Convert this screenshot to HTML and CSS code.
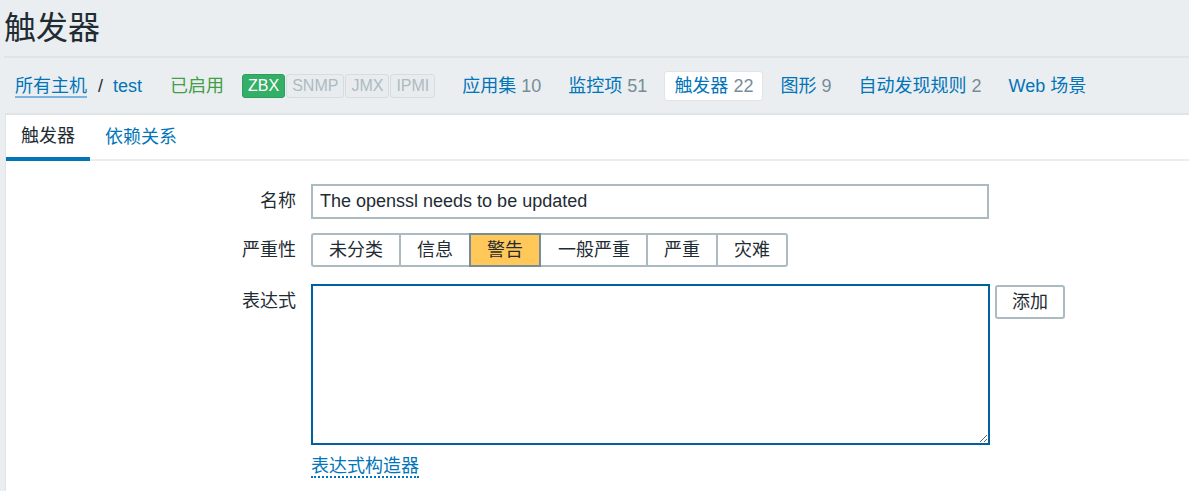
FILE: index.html
```html
<!DOCTYPE html>
<html lang="zh-CN">
<head>
<meta charset="utf-8">
<title>触发器</title>
<link rel="stylesheet" href="styles.css">
</head>
<body>
<header class="header">
  <h1 class="title">触发器</h1>
</header>
<nav class="nav">
  <a class="crumb-link" href="#">所有主机</a>
  <span class="sep">/</span>
  <a class="crumb" href="#">test</a>
  <span class="enabled">已启用</span>
  <span class="tags">
    <span class="tag tag-on">ZBX</span>
    <span class="tag tag-off">SNMP</span>
    <span class="tag tag-off">JMX</span>
    <span class="tag tag-off">IPMI</span>
  </span>
  <ul class="nav-items">
    <li class="nav-item"><a href="#">应用集</a> <span class="count">10</span></li>
    <li class="nav-item"><a href="#">监控项</a> <span class="count">51</span></li>
    <li class="nav-item nav-item-active"><a href="#">触发器</a> <span class="count">22</span></li>
    <li class="nav-item"><a href="#">图形</a> <span class="count">9</span></li>
    <li class="nav-item"><a href="#">自动发现规则</a> <span class="count">2</span></li>
    <li class="nav-item"><a href="#">Web 场景</a></li>
  </ul>
</nav>
<main class="panel">
  <div class="tabs">
    <a class="tab tab-active" href="#">触发器</a>
    <a class="tab" href="#">依赖关系</a>
  </div>
  <form class="form">
    <div class="row row-name">
      <label class="label">名称</label>
      <div class="field"><input class="input" type="text" value="The openssl needs to be updated"></div>
    </div>
    <div class="row row-severity">
      <label class="label label-sev">严重性</label>
      <div class="field">
        <div class="seg">
          <span class="seg-item">未分类</span>
          <span class="seg-item">信息</span>
          <span class="seg-item seg-active">警告</span>
          <span class="seg-item seg-after">一般严重</span>
          <span class="seg-item">严重</span>
          <span class="seg-item seg-last">灾难</span>
        </div>
      </div>
    </div>
    <div class="row row-expr">
      <label class="label">表达式</label>
      <div class="field field-expr">
        <textarea class="textarea"></textarea>
        <button class="btn" type="button">添加</button>
      </div>
    </div>
    <div class="row row-link">
      <span class="label"></span>
      <div class="field"><a class="dotted" href="#">表达式构造器</a></div>
    </div>
  </form>
</main>
</body>
</html>
```

FILE: styles.css
```css
html, body {
  margin: 0;
  padding: 0;
}
body {
  background: #ebeef0;
  color: #1f2c33;
  font-family: "Liberation Sans", "Noto Sans CJK SC", sans-serif;
  font-size: 18px;
  overflow: hidden;
}
a {
  color: #0275b8;
  text-decoration: none;
}
.header {
  margin-left: 4px;
  height: 56px;
  border-bottom: 2px solid #dfe4e7;
  display: flex;
  align-items: center;
}
.title {
  margin: 0;
  font-size: 32px;
  font-weight: normal;
  line-height: 40px;
  color: #1f2c33;
}
.nav {
  height: 55px;
  display: flex;
  align-items: center;
  padding-left: 15px;
  line-height: 22px;
}
.crumb-link {
  border-bottom: 2px solid #7db3dc;
  line-height: 20px;
  padding-top: 2px;
}
.sep {
  margin: 0 10px 0 11px;
  color: #1f2c33;
}
.enabled {
  color: #429e47;
  margin-left: 28px;
}
.tags {
  display: flex;
  gap: 1px;
  margin-left: 18px;
}
.tag {
  font-size: 16px;
  line-height: 22px;
  padding: 0 5px;
  border: 1px solid #d6dde1;
  border-radius: 3px;
}
.tag-on {
  background: #34af67;
  border-color: #2f9e5d;
  color: #ffffff;
}
.tag-off {
  background: #e9ecee;
  color: #acbbc2;
}
.nav-items {
  list-style: none;
  margin: 0 0 0 17px;
  padding: 0;
  display: flex;
  gap: 7px;
}
.nav-item {
  padding: 0 9px;
  height: 28px;
  line-height: 28px;
  border: 1px solid transparent;
  border-radius: 3px;
  white-space: nowrap;
}
.nav-item-active {
  background: #ffffff;
  border-color: #dfe4e7;
}
.count {
  color: #768d99;
}
.panel {
  margin-left: 5px;
  background: #ffffff;
  border-top: 2px solid #dfe4e7;
  border-left: 1px solid #dfe4e7;
  height: 400px;
}
.tabs {
  display: flex;
  height: 44px;
  border-bottom: 2px solid #ebeef0;
}
.tab {
  padding: 0 15px;
  line-height: 44px;
  height: 44px;
  box-sizing: border-box;
}
.tab-active {
  color: #1f2c33;
  border-bottom: 4px solid #0275b8;
  height: 46px;
  line-height: 42px;
}
.form {
  padding-top: 23px;
}
.row {
  display: flex;
  align-items: flex-start;
}
.row-severity {
  margin-top: 14px;
}
.row-expr {
  margin-top: 17px;
}
.row-link {
  margin-top: 11px;
}
.label {
  width: 305px;
  padding-right: 15px;
  box-sizing: border-box;
  flex: none;
  text-align: right;
  line-height: 35px;
  color: #1f2c33;
}
.label-sev {
  line-height: 34px;
}
.field {
  display: flex;
}
.input {
  width: 678px;
  height: 35px;
  box-sizing: border-box;
  border: 2px solid #acbbc2;
  padding: 0 7px;
  font: inherit;
  font-size: 18px;
  color: #1f2c33;
  background: #ffffff;
  outline: none;
}
.seg {
  display: flex;
  border-radius: 3px;
}
.seg-item {
  padding: 0 16px;
  line-height: 30px;
  border-top: 2px solid #acbbc2;
  border-bottom: 2px solid #acbbc2;
  border-left: 2px solid #acbbc2;
  background: #ffffff;
}
.seg-item:first-child {
  border-radius: 3px 0 0 3px;
}
.seg-last {
  border-right: 2px solid #acbbc2;
  border-radius: 0 3px 3px 0;
}
.seg-active {
  background: #ffc859;
  border-color: #768d99;
  border-right: 2px solid #768d99;
}
.seg-after {
  border-left: 0;
  padding-left: 17px;
}
.field-expr {
  align-items: flex-start;
}
.textarea {
  display: block;
  width: 679px;
  height: 161px;
  box-sizing: border-box;
  border: 2px solid #00619e;
  margin: 0;
  padding: 4px 7px;
  font: inherit;
  outline: none;
  background: #ffffff;
}
.btn {
  margin: 1px 0 0 5px;
  height: 34px;
  padding: 0 15px;
  border: 2px solid #acbbc2;
  border-radius: 3px;
  background: #ffffff;
  color: #1f2c33;
  font: inherit;
  font-size: 18px;
  line-height: 30px;
}
.dotted {
  display: inline-block;
  line-height: 20px;
  border-bottom: 2px dotted #0275b8;
}
```
